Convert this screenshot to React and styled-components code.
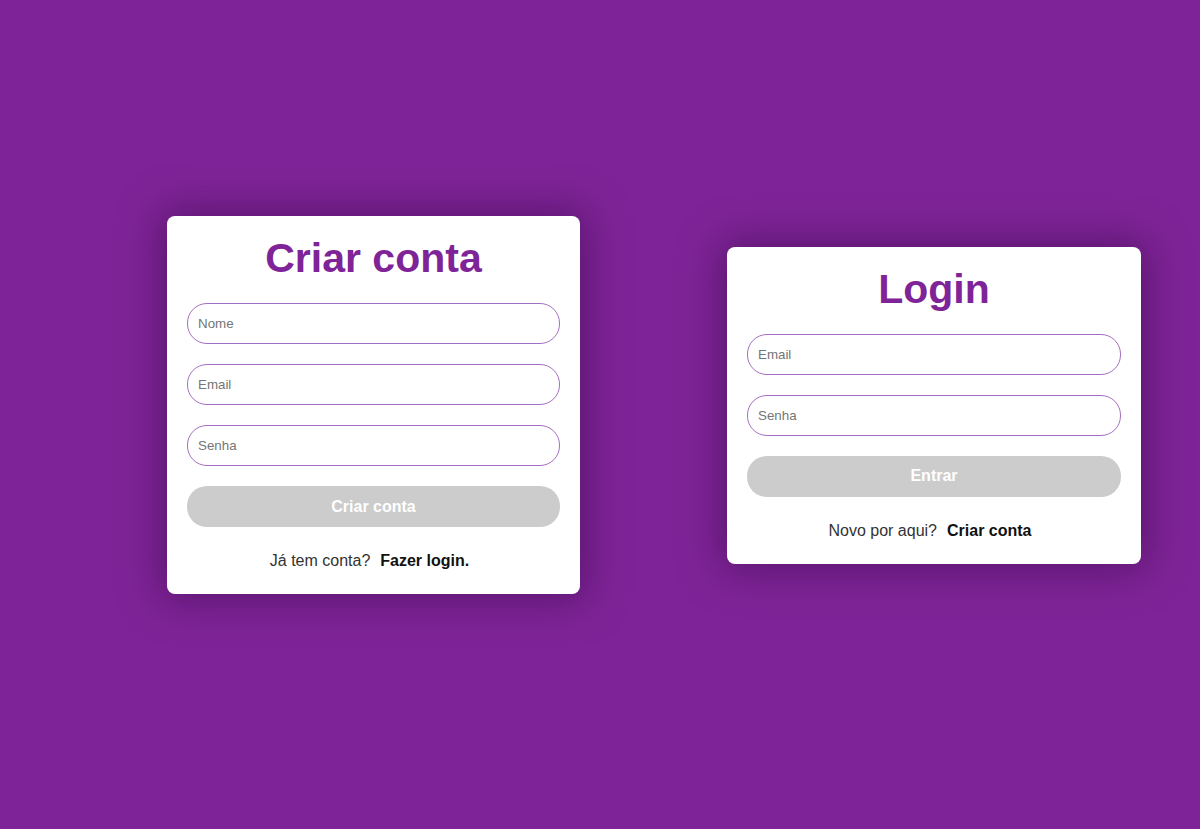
import styled, { createGlobalStyle } from 'styled-components';

const GlobalStyle = createGlobalStyle`
    * {
        box-sizing: border-box;
    }
    body {
        margin: 0;
        font-family: "Liberation Sans", Arial, sans-serif;
        background-color: #7f2498;
    }
`;

const Page = styled.div`
    min-height: 100vh;
    display: flex;
    align-items: center;
    gap: 147px;
    padding: 0 0 19px 167px;
    background-color: #7f2498;
`;

const Card = styled.div`
    width: ${(props) => props.width || 414}px;
    background-color: white;
    border-radius: 8px;
    padding: 20px 20px 24px;
    display: flex;
    flex-direction: column;
    box-shadow: 0 0 40px 6px rgba(60, 10, 75, 0.55);
`;

const Title = styled.h1`
    margin: 0 0 22px;
    text-align: center;
    color: #7f2498;
    font-size: 41px;
    font-weight: 700;
    line-height: 45px;
`;

const Form = styled.form`
    display: flex;
    flex-direction: column;
    gap: 20px;
`;

const Input = styled.input`
    width: 100%;
    height: 41px;
    border: 1px solid #a56fc1;
    border-radius: 20px;
    padding: 0 10px;
    font-family: "Liberation Sans", Arial, sans-serif;
    font-size: 13.33px;
    outline: none;

    &::placeholder {
        color: #757575;
    }
`;

const Button = styled.button`
    height: 41px;
    border: none;
    border-radius: 20px;
    background-color: #cccccc;
    color: white;
    font-family: "Liberation Sans", Arial, sans-serif;
    font-size: 16px;
    font-weight: 700;
    cursor: pointer;
`;

const Footer = styled.p`
    margin: 25px 0 0;
    padding-right: 8px;
    text-align: center;
    font-size: 16px;
    line-height: 18px;
    color: #333333;
`;

const FooterLink = styled.a`
    margin-left: 10px;
    color: #111111;
    font-weight: 700;
    text-decoration: none;
    cursor: pointer;
`;

const App = () => {
    return (
        <Page>
            <GlobalStyle />
            <Card width={413}>
                <Title>Criar conta</Title>
                <Form onSubmit={(e) => e.preventDefault()}>
                    <Input type="text" placeholder="Nome" />
                    <Input type="email" placeholder="Email" />
                    <Input type="password" placeholder="Senha" />
                    <Button type="submit">Criar conta</Button>
                </Form>
                <Footer>
                    Já tem conta?<FooterLink>Fazer login.</FooterLink>
                </Footer>
            </Card>
            <Card>
                <Title>Login</Title>
                <Form onSubmit={(e) => e.preventDefault()}>
                    <Input type="email" placeholder="Email" />
                    <Input type="password" placeholder="Senha" />
                    <Button type="submit">Entrar</Button>
                </Form>
                <Footer>
                    Novo por aqui?<FooterLink>Criar conta</FooterLink>
                </Footer>
            </Card>
        </Page>
    );
};

export default App;
